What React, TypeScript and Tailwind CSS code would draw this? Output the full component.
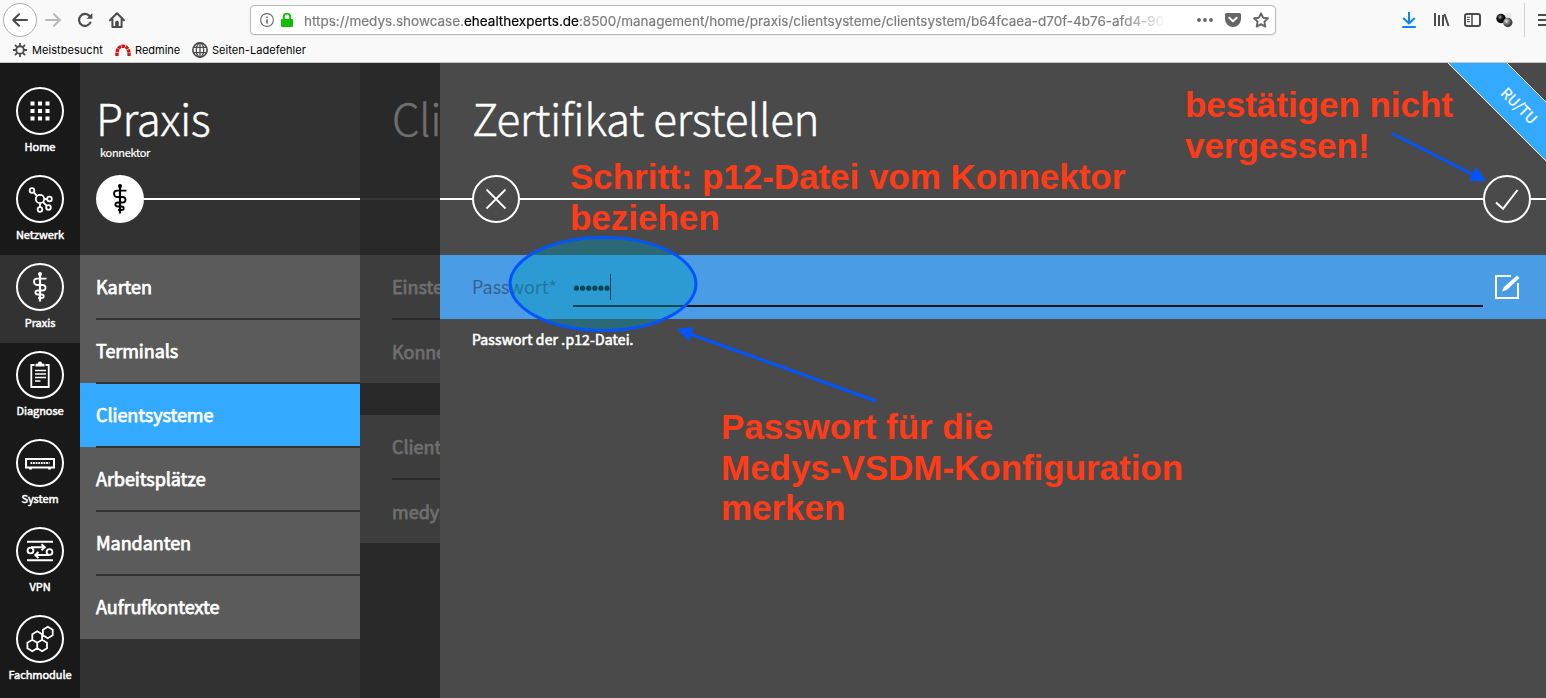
import type { ReactNode } from "react";

const NAV_FONT = "font-['Noto_Sans_CJK_SC','Noto_Sans',sans-serif]";

function BrowserBar() {
  return (
    <header className="h-[63px] shrink-0 border-b border-[#c8c8c8] bg-[#f9f9fa] font-['Inter','Liberation_Sans',sans-serif] text-black">
      <div className="flex h-10 items-center">
        <div className="ml-[3px] flex size-[34px] shrink-0 items-center justify-center rounded-full border border-[#b1b1b1] bg-white">
          <svg width="16" height="16" viewBox="0 0 16 16" fill="none" stroke="#4c4c4c" strokeWidth="2" strokeLinecap="round" strokeLinejoin="round">
            <path d="M15 8H1.5M7 2.2 1.2 8 7 13.8" />
          </svg>
        </div>
        <svg className="ml-2 shrink-0" width="16" height="16" viewBox="0 0 16 16" fill="none" stroke="#b8b8b8" strokeWidth="2" strokeLinecap="round" strokeLinejoin="round">
          <path d="M1 8h13.5M9 2.2 14.8 8 9 13.8" />
        </svg>
        <svg className="ml-4 shrink-0" width="16" height="16" viewBox="0 0 16 16" fill="none" stroke="#4c4c4c" strokeWidth="2.2" strokeLinecap="round">
          <path d="M13.4 10.6A6 6 0 1 1 12.6 4" />
          <path d="M15.4 1v5.8H9.6z" fill="#4c4c4c" stroke="none" />
        </svg>
        <svg className="ml-4 shrink-0" width="16" height="16" viewBox="0 0 16 16" fill="none" stroke="#4c4c4c" strokeWidth="2" strokeLinecap="round" strokeLinejoin="round">
          <path d="M1 8.2 8 1.3l7 6.9M3.4 7.5V15h9.2V7.5" />
          <path d="M6.2 15v-4.6c0-1 .8-1.6 1.8-1.6s1.8.7 1.8 1.6V15z" fill="#4c4c4c" stroke="none" />
        </svg>
        <div className="ml-[125px] flex h-[30px] w-[1026px] shrink-0 items-center rounded-[4px] border border-[#b9b9b9] bg-white shadow-[0_1px_3px_rgba(0,0,0,0.06)]">
          <svg className="ml-[9px] shrink-0" width="14" height="14" viewBox="0 0 14 14" fill="none" stroke="#6a6a6a">
            <circle cx="7" cy="7" r="6.4" strokeWidth="1.1" />
            <path d="M7 6.2V10.5M7 3.5v1.4" strokeWidth="1.6" />
          </svg>
          <svg className="ml-[7px] shrink-0" width="12" height="14" viewBox="0 0 12 14">
            <path d="M2.8 7V3.8a3.2 3.2 0 0 1 6.4 0V7" fill="none" stroke="#12bc00" strokeWidth="2" />
            <rect y="6" width="12" height="8" rx="1" fill="#12bc00" />
          </svg>
          <div className="ml-[11px] w-[860px] overflow-hidden pt-0.5 text-[13.5px] tracking-[-0.01px] whitespace-nowrap text-[#7c7c7c] [mask-image:linear-gradient(to_right,black_815px,transparent_864px)] [-webkit-text-stroke:0.2px]">
            https://medys.showcase.<span className="text-black">ehealthexperts.de</span>:8500/management/home/praxis/clientsysteme/clientsystem/b64fcaea-d70f-4b76-afd4-90
          </div>
          <svg className="ml-[33px] shrink-0" width="16" height="4" viewBox="0 0 16 4" fill="#666">
            <circle cx="2" cy="2" r="1.9" /><circle cx="8" cy="2" r="1.9" /><circle cx="14" cy="2" r="1.9" />
          </svg>
          <svg className="ml-3 shrink-0" width="16" height="14" viewBox="0 0 16 14">
            <path d="M1.5 0h13A1.5 1.5 0 0 1 16 1.5V6A8 8 0 0 1 0 6V1.5A1.5 1.5 0 0 1 1.5 0z" fill="#666" />
            <path d="m4.3 4.8 3.7 3.5 3.7-3.5" fill="none" stroke="white" strokeWidth="2" strokeLinecap="round" strokeLinejoin="round" />
          </svg>
          <svg className="ml-3 shrink-0" width="16" height="16" viewBox="0 0 16 16" fill="none" stroke="#666" strokeWidth="1.9" strokeLinejoin="round">
            <path d="m8 1.3 2.1 4.4 4.8.6-3.5 3.4.9 4.9L8 12.2l-4.3 2.4.9-4.9L1.1 6.3l4.8-.6z" />
          </svg>
        </div>
        <svg className="ml-[126px] shrink-0" width="14" height="16" viewBox="0 0 14 16" fill="none" stroke="#0a84ff" strokeWidth="2">
          <path d="M7 0v11M1.8 6.5 7 11.5l5.2-5M1 15h12" strokeLinejoin="round" strokeLinecap="round" />
        </svg>
        <svg className="ml-[17px] shrink-0" width="17" height="16" viewBox="0 0 17 16" fill="none" stroke="#4c4c4c" strokeWidth="2">
          <path d="M2 1v13M6 3v11M10 3v11M11.5 2l4 12" />
        </svg>
        <svg className="ml-[14px] shrink-0" width="17" height="14" viewBox="0 0 17 14" fill="none" stroke="#4c4c4c">
          <rect x="1" y="1" width="15" height="12" rx="2" strokeWidth="2" />
          <path d="M8 1v12" strokeWidth="1.5" /><path d="M3 4.3h3M3 6.5h2.5M3 8.7h3" />
        </svg>
        <svg className="ml-[15px] shrink-0" width="17" height="16" viewBox="0 0 17 16">
          <defs>
            <radialGradient id="dark" cx="0.4" cy="0.35"><stop offset="0" stopColor="#aaa" /><stop offset="0.5" stopColor="#222" /><stop offset="1" stopColor="#000" /></radialGradient>
            <radialGradient id="gray" cx="0.35" cy="0.35"><stop offset="0" stopColor="#eee" /><stop offset="0.5" stopColor="#888" /><stop offset="1" stopColor="#444" /></radialGradient>
          </defs>
          <circle cx="12" cy="4.5" r="3.8" fill="#e9e9e9" />
          <circle cx="5" cy="6.5" r="4.7" fill="url(#dark)" />
          <circle cx="11.8" cy="10.5" r="4.7" fill="url(#gray)" />
        </svg>
        <div className="ml-[11px] h-[34px] w-px shrink-0 bg-[#d4d4d4]" />
        <svg className="ml-[13px] shrink-0" width="9" height="14" viewBox="0 0 9 14" stroke="#4c4c4c" strokeWidth="2">
          <path d="M0 2h9M0 7h9M0 12h9" />
        </svg>
      </div>
      <div className="flex h-5 items-center text-[11px]">
        <svg className="ml-[13px]" width="14" height="14" viewBox="0 0 14 14" fill="none" stroke="#4c4c4c">
          <circle cx="7" cy="7" r="3.8" strokeWidth="1.9" />
          <path d="M7 0v3M7 11v3M0 7h3M11 7h3M2 2l2.200 2.200M9.800 9.800 12 12M12 2 9.800 4.200M4.200 9.800 2 12" strokeWidth="1.8" />
        </svg>
        <span className="ml-[5px] w-[72px] tracking-[0.05px] whitespace-nowrap">Meistbesucht</span>
        <svg className="ml-[11px]" width="16" height="12" viewBox="0 0 16 12" fill="none">
          <path d="M2 12C1.500 5.500 4 2.200 8 2.200s6.500 3.300 6 9.800" stroke="#cc1414" strokeWidth="3.4" strokeDasharray="3.3 .6" />
        </svg>
        <span className="ml-[4px] w-[46px] whitespace-nowrap">Redmine</span>
        <svg className="ml-[11px]" width="16" height="16" viewBox="0 0 16 16" fill="none" stroke="#4c4c4c">
          <circle cx="8" cy="8" r="7.1" strokeWidth="1.7" />
          <ellipse cx="8" cy="8" rx="3.7" ry="7" strokeWidth="1.3" />
          <path d="M8 1v14M1.500 5.300h13M1.500 10.700h13" strokeWidth="1.3" />
        </svg>
        <span className="ml-1 tracking-[0.05px] whitespace-nowrap">Seiten-Ladefehler</span>
      </div>
    </header>
  );
}

function StaffIcon() {
  return (
    <g>
      <circle cx="24" cy="11" r="2" fill="currentColor" stroke="none" />
      <path d="M24 10v28.500" strokeWidth="2.2" />
      <path d="M30.500 15.700H21c-4 0-4 6.300 0 6.300h5.500c4 0 4 5.500 0 5.500H22c-3.500 0-3.500 4 0 4h3.500c3 0 3 3.500 0 3.500H22" strokeWidth="1.8" />
    </g>
  );
}

const hexagon = (x: number, y: number) =>
  `M${x} ${y - 5.7}l4.9 2.85v5.7l-4.9 2.85l-4.9-2.85v-5.7z`;

const NAV: { label: string; icon: ReactNode; active?: boolean }[] = [
  {
    label: "Home",
    icon: (
      <g fill="currentColor" stroke="none">
        {[14.5, 22, 29.5].flatMap((x) => [14.5, 22, 29.5].map((y) => <rect key={`${x}-${y}`} x={x} y={y} width="4" height="4" />))}
      </g>
    ),
  },
  {
    label: "Netzwerk",
    icon: (
      <g strokeWidth="1.8">
        <circle cx="24" cy="24" r="4.2" />
        <circle cx="16" cy="15.5" r="2.3" /><circle cx="33.5" cy="24" r="2.3" />
        <circle cx="32.5" cy="32.5" r="2.3" /><circle cx="24" cy="34.5" r="2.3" />
        <path d="m17.800 17.300 3.200 3.500M28.200 24h3M27 27l3.800 3.800M24 28.200v4" />
      </g>
    ),
  },
  { label: "Praxis", icon: <StaffIcon />, active: true },
  {
    label: "Diagnose",
    icon: (
      <g>
        <path d="M18.500 14H15.300v22h17.400V14h-3.200" strokeWidth="1.8" />
        <path d="M19.500 15.500v-2.700h2.300a2.200 2.200 0 0 1 4.400 0h2.300v2.700z" fill="currentColor" stroke="none" />
        <path d="M19 19.500h11M19 23h11M19 26.500h11M19 30h5.500" strokeWidth="1.7" />
      </g>
    ),
  },
  {
    label: "System",
    icon: (
      <g>
        <rect x="10" y="20" width="28" height="8.5" strokeWidth="2" />
        <path d="M14.500 24h19" strokeWidth="2" strokeDasharray="1.8 .8" />
        <path d="M13 29.500h3M32 29.500h3" />
      </g>
    ),
  },
  {
    label: "VPN",
    icon: (
      <g strokeWidth="1.9">
        <path d="M11 14.700h26M11 33.300h26" />
        <circle cx="14.5" cy="23.5" r="2.9" /><circle cx="33.5" cy="25" r="2.9" />
        <path d="M15 20.300h13.500M25.500 17.200l3.300 3.100-3.300 3M33 28H19.500M22.500 25l-3.300 3 3.300 3.100" />
      </g>
    ),
  },
  {
    label: "Fachmodule",
    icon: <path d={hexagon(16.3, 30.5) + hexagon(26.1, 30.5) + hexagon(21.2, 22) + hexagon(31.8, 17.5)} strokeWidth="1.8" />,
  },
];

function Ring({ children }: { children: ReactNode }) {
  return (
    <svg className="shrink-0" width="48" height="48" viewBox="0 0 48 48" fill="none" stroke="currentColor" strokeWidth="2">
      <circle cx="24" cy="24" r="23" />
      {children}
    </svg>
  );
}

function Sidebar() {
  return (
    <nav className="flex w-20 shrink-0 flex-col bg-[#191919] pt-4 text-white">
      {NAV.map(({ label, icon, active }) => (
        <div key={label} className={`flex h-[88px] shrink-0 flex-col items-center pt-2 ${active ? "bg-[#323232]" : ""}`}>
          <Ring>{icon}</Ring>
          <span className="mt-[3px] text-[11px] leading-4 tracking-[-0.05px] [-webkit-text-stroke:0.5px]">{label}</span>
        </div>
      ))}
    </nav>
  );
}

function PraxisPanel() {
  const items = ["Karten", "Terminals", "Clientsysteme", "Arbeitsplätze", "Mandanten", "Aufrufkontexte"];
  return (
    <section className="w-[280px] shrink-0 bg-[#323232] text-white">
      <div className="h-48 pt-[26px]">
        <h1 className="pl-4 text-[44px] leading-[56px] font-light tracking-[-0.5px] [-webkit-text-stroke:0.4px]">Praxis</h1>
        <p className="mt-px pl-5 text-[11px] leading-3 tracking-[-0.3px] [-webkit-text-stroke:0.2px]">konnektor</p>
        <div className="mt-[17px] flex items-center pl-4">
          <svg className="shrink-0 text-black" width="48" height="48" viewBox="0 0 48 48" fill="none" stroke="currentColor">
            <circle cx="24" cy="24" r="24" fill="white" stroke="none" />
            <StaffIcon />
          </svg>
          <div className="h-0.5 flex-1 bg-white" />
        </div>
      </div>
      <ul>
        {items.map((item, i) => (
          <li key={item} className={`flex h-16 pl-4 ${item === "Clientsysteme" ? "bg-[#33a9ff]" : "bg-[#5b5b5b]"}`}>
            <span
              className={`flex flex-1 items-center border-[#323232] text-[18px] tracking-[-0.05px] [-webkit-text-stroke:0.75px] ${i > 0 ? "border-t pb-0.5" : ""} ${i < items.length - 1 ? "border-b" : ""}`}
            >
              {item}
            </span>
          </li>
        ))}
      </ul>
    </section>
  );
}

function DimmedGroup({ items }: { items: string[] }) {
  return (
    <ul className="mb-8 bg-[#3d3d3d]">
      {items.map((item, i) => (
        <li key={item} className="flex h-16 pl-8">
          <span className={`flex w-12 items-center overflow-hidden border-[#292929] text-[18px] whitespace-nowrap [-webkit-text-stroke:0.75px] ${i ? "border-t" : "border-b"}`}>
            {item}
          </span>
        </li>
      ))}
    </ul>
  );
}

function ClientPanel() {
  return (
    <section className="w-20 shrink-0 overflow-hidden bg-[#292929] text-[#6f6f6f]">
      <div className="h-48 pt-[26px]">
        <h2 className="pl-8 text-[44px] leading-[56px] font-light tracking-[-0.5px] whitespace-nowrap [-webkit-text-stroke:0.4px]">Clientsysteme</h2>
        <div className="mt-[53px] h-0.5 bg-[#353535]" />
      </div>
      <DimmedGroup items={["Einstellungen", "Konnektor"]} />
      <DimmedGroup items={["Clientsystem", "medys"]} />
    </section>
  );
}

function CertificatePanel() {
  return (
    <main className="min-w-0 flex-1 bg-[#4a4a4a] text-white">
      <div className="h-48 pt-[26px]">
        <h2 className="pl-8 text-[44px] leading-[56px] font-light tracking-[-0.5px] [-webkit-text-stroke:0.4px]">Zertifikat erstellen</h2>
        <div className="mt-[30px] flex items-center">
          <div className="h-0.5 w-8 bg-white" />
          <Ring><path d="m14.500 14.500 19 19M33.500 14.500l-19 19" strokeWidth="1.8" /></Ring>
          <div className="h-0.5 flex-1 bg-white" />
          <Ring><path d="m13 27.500 7 6.300L34.500 15" /></Ring>
          <div className="h-0.5 w-[15px] bg-white" />
        </div>
      </div>
      <div className="flex h-16 items-start bg-[#4a9ce5] pl-8">
        <label className="w-[101px] shrink-0 pt-[19px] text-[18px] leading-6 text-[#37618a]">Passwort*</label>
        <div className="flex h-[52px] w-[910px] items-end border-b-2 border-[#151515] pb-[5px]">
          <svg width="40" height="26" viewBox="0 0 40 26" fill="#111">
            {[3.5, 9.6, 15.7, 21.8, 27.9, 34].map((x) => <circle key={x} cx={x} cy="14.2" r="2.6" />)}
            <rect x="37" width="1" height="26" />
          </svg>
        </div>
        <svg className="mt-5 ml-3" width="26" height="24" viewBox="0 0 26 24" fill="none" stroke="white" strokeWidth="2">
          <path d="M16 1H1v22h22V8" />
          <path d="m7 16.500 2-4.500L22 .5 24.500 3 12 14.800z" fill="white" stroke="none" />
        </svg>
      </div>
      <p className="pt-[9px] pl-8 text-[14px] leading-[22px] tracking-[0.13px] [-webkit-text-stroke:0.6px]">Passwort der .p12-Datei.</p>
    </main>
  );
}

function Annotations() {
  const text = "absolute text-[35px] leading-[40.5px] font-bold tracking-[-0.03px] whitespace-nowrap text-[#ff3b18] font-['Liberation_Sans',Arial,sans-serif]";
  return (
    <div className="pointer-events-none absolute inset-0">
      <svg className="absolute top-0 right-0" width="98" height="98" viewBox="0 0 98 98">
        <path d="M-1 -1H58L99 40V99z" fill="#33a9ff" stroke="white" strokeWidth="1" />
        <text x="72" y="42" transform="rotate(45 72 42)" textAnchor="middle" dominantBaseline="central" fill="white" stroke="white" strokeWidth="0.3" fontSize="14.5">RU/TU</text>
      </svg>
      <svg className="absolute inset-0" width="1546" height="635" viewBox="0 63 1546 635">
        <ellipse cx="603" cy="284" rx="93" ry="46.5" fill="#0099b8" fillOpacity="0.4" stroke="#0055ff" strokeWidth="3" />
        <g stroke="#0055ff" strokeWidth="3">
          <path d="M876 401 690 334M1392 133.500 1474 175" />
        </g>
        <path d="m677 329 16.500-2-4.500 14.500zM1486 181l-10-14-7 14z" fill="#0055ff" />
      </svg>
      <div className={`${text} top-[94px] left-[570px]`}>Schritt: p12-Datei vom Konnektor<br />beziehen</div>
      <div className={`${text} top-[22px] left-[1185px]`}>bestätigen nicht<br />vergessen!</div>
      <div className={`${text} top-[344px] left-[721px]`}>Passwort für die<br />Medys-VSDM-Konfiguration<br />merken</div>
    </div>
  );
}

export default function App() {
  return (
    <div className="flex h-[698px] w-[1546px] flex-col overflow-hidden">
      <BrowserBar />
      <div className={`relative flex min-h-0 flex-1 overflow-hidden ${NAV_FONT}`}>
        <Sidebar />
        <PraxisPanel />
        <ClientPanel />
        <CertificatePanel />
        <Annotations />
      </div>
    </div>
  );
}
